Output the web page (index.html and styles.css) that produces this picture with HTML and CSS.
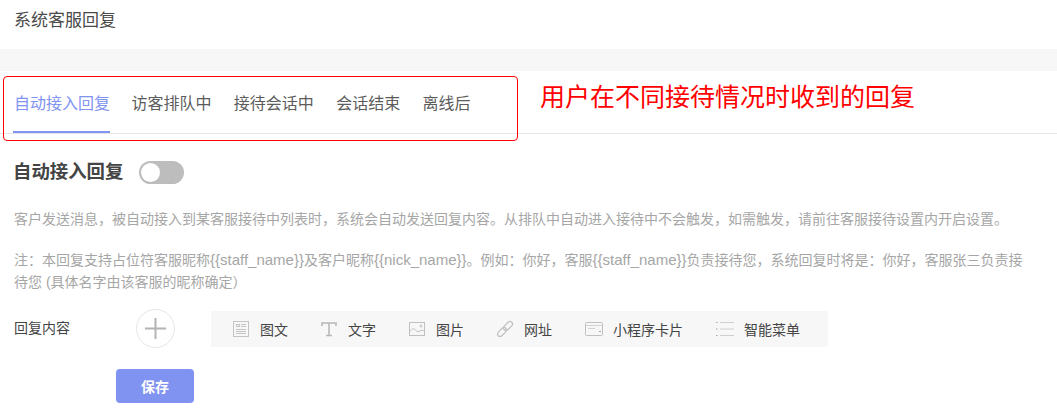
FILE: index.html
```html
<!DOCTYPE html>
<html lang="zh-CN">
<head>
    <meta charset="UTF-8">
    <title>系统客服回复</title>
    <link rel="stylesheet" href="styles.css">
</head>
<body>
    <header class="page-head">系统客服回复</header>
    <div class="strip"></div>

    <nav class="tabs">
        <a class="tab active">自动接入回复</a>
        <a class="tab">访客排队中</a>
        <a class="tab">接待会话中</a>
        <a class="tab">会话结束</a>
        <a class="tab">离线后</a>
    </nav>

    <!-- annotation drawn on top of the tabs -->
    <div class="note-box"></div>
    <div class="note-text">用户在不同接待情况时收到的回复</div>

    <main class="content">
        <div class="section-head">
            <h2>自动接入回复</h2>
            <span class="switch"><span class="knob"></span></span>
        </div>

        <p class="desc first">客户发送消息，被自动接入到某客服接待中列表时，系统会自动发送回复内容。从排队中自动进入接待中不会触发，如需触发，请前往客服接待设置内开启设置。</p>
        <p class="desc">注：本回复支持占位符客服昵称<span class="latin">{{staff_name}}</span>及客户昵称<span class="latin">{{nick_name}}</span>。例如：你好，客服<span class="latin">{{staff_name}}</span>负责接待您，系统回复时将是：你好，客服张三负责接<br>待您 (具体名字由该客服的昵称确定）</p>

        <div class="reply-row">
            <span class="reply-label">回复内容</span>
            <span class="add-btn">
                <svg width="21" height="21" viewBox="0 0 21 21"><path d="M10.500 0v21M0 10.500h21" stroke="#b4b4b4" stroke-width="2" fill="none"/></svg>
            </span>
            <div class="toolbar">
                <div class="tool">
                    <svg class="tool-icon" width="18" height="18" viewBox="0 0 18 18" fill="none" stroke="#c4c4c4">
                        <rect x="1.500" y="1.500" width="15" height="15"/>
                        <rect x="4.500" y="4.500" width="3" height="2"/>
                        <path d="M9 4.500h5M9 6.500h5M4 9.500h10M4 11.500h10M4 13.500h10"/>
                    </svg>
                    <span>图文</span>
                </div>
                <div class="tool">
                    <svg class="tool-icon" width="18" height="18" viewBox="0 0 18 18" fill="none" stroke="#b8b8b8">
                        <path d="M2 6V3h14v3M9 3v13M6 15.500h6" stroke-width="1.600"/>
                    </svg>
                    <span>文字</span>
                </div>
                <div class="tool">
                    <svg class="tool-icon" width="18" height="18" viewBox="0 0 18 18" fill="none" stroke="#c0c0c0">
                        <rect x="1.500" y="2.500" width="15" height="13"/>
                        <path d="M2 11.500c2-3 3.500-3.500 5.500-1.500s3 2 4.500 1 3-1 4 0"/>
                        <circle cx="13" cy="6" r="1"/>
                    </svg>
                    <span>图片</span>
                </div>
                <div class="tool">
                    <svg class="tool-icon" width="18" height="18" viewBox="0 0 18 18" fill="none" stroke="#c0c0c0" stroke-width="1.200">
                        <g transform="rotate(-45 9 9)">
                            <rect x="-0.500" y="6.500" width="10.500" height="5" rx="2.500"/>
                            <rect x="8" y="6.500" width="10.500" height="5" rx="2.500"/>
                        </g>
                    </svg>
                    <span>网址</span>
                </div>
                <div class="tool card">
                    <svg class="tool-icon" width="20" height="18" viewBox="0 0 20 18" fill="none" stroke="#c0c0c0">
                        <rect x="1.500" y="2.500" width="17" height="13" rx="1"/>
                        <path d="M2 5.500h16M4 8.500h7" stroke="#d2d2d2"/>
                        <path d="M15 11.500h2" stroke="#a8a8a8"/>
                    </svg>
                    <span>小程序卡片</span>
                </div>
                <div class="tool">
                    <svg class="tool-icon" width="18" height="18" viewBox="0 0 18 18" fill="none" stroke="#cfcfcf">
                        <path d="M4 2.500h14M4 9h14M4 15.500h14"/>
                        <path d="M0 2.500h1.500M0 9h1.500M0 15.500h1.500" stroke="#a8a8a8"/>
                    </svg>
                    <span>智能菜单</span>
                </div>
            </div>
        </div>

        <button class="save-btn" type="button">保存</button>
    </main>
</body>
</html>
```

FILE: styles.css
```css
html {
    background: #fff;
}

body {
    margin: 0;
    font-family: "Liberation Sans", "Noto Sans CJK SC", sans-serif;
    color: #333;
}

.page-head {
    height: 49px;
    padding: 9px 0 0 14px;
    box-sizing: border-box;
    font-size: 17px;
    line-height: 24px;
    color: #4a4a4a;
}

.strip {
    height: 22px;
    background: #f7f7f7;
}

.tabs {
    display: flex;
    gap: 22.4px;
    height: 62px;
    padding-left: 13px;
    border-bottom: 1px solid #e6e6e6;
}

.tab {
    height: 62px;
    box-sizing: border-box;
    padding-top: 21px;
    font-size: 16px;
    line-height: 24px;
    color: #5c5c5c;
}

.tab.active {
    width: 97px;
    margin-right: -1px;
    padding-left: 1px;
    color: #8093f1;
    border-bottom: 2px solid #8093f1;
}

.note-box {
    position: absolute;
    left: 3px;
    top: 76px;
    width: 513px;
    height: 63px;
    border: 1px solid #f00;
    border-radius: 4px;
}

.note-text {
    position: absolute;
    left: 540px;
    top: 80px;
    font-size: 25px;
    line-height: 34px;
    color: #f00;
}

.content {
    padding-left: 14px;
}

.section-head {
    display: flex;
    align-items: center;
    gap: 16px;
    margin-top: 26px;
    height: 24px;
}

.section-head h2 {
    margin: 0 0 0 -1px;
    font-size: 18.4px;
    line-height: 24px;
    font-weight: 700;
    color: #444;
}

.switch {
    display: block;
    width: 45px;
    height: 23px;
    border-radius: 12px;
    background: #bdbdbd;
}

.knob {
    display: block;
    width: 19px;
    height: 19px;
    margin: 2px 0 0 2px;
    border-radius: 50%;
    background: #fff;
}

.desc {
    margin: 19px 0 0;
    width: 1030px;
    font-size: 14px;
    line-height: 22px;
    color: #a6a6a6;
}

.desc.first {
    margin-top: 24px;
}

/* the latin part of the notes runs a little larger than the chinese */
.latin {
    font-size: 15px;
}

.reply-row {
    display: flex;
    align-items: center;
    margin-top: 16px;
    height: 40px;
}

.reply-label {
    width: 122px;
    margin-bottom: 4px;
    font-size: 14px;
    color: #444;
}

.add-btn {
    display: flex;
    align-items: center;
    justify-content: center;
    width: 39px;
    height: 39px;
    margin-bottom: 2px;
    box-sizing: border-box;
    border: 1px solid #e6e6e6;
    border-radius: 50%;
}

.toolbar {
    display: flex;
    align-items: center;
    gap: 32px;
    width: 617px;
    height: 36px;
    margin-left: 36px;
    padding-left: 21px;
    box-sizing: border-box;
    background: #f7f7f7;
}

.tool {
    display: flex;
    align-items: center;
    gap: 10px;
    font-size: 14px;
    color: #444;
}

.tool.card {
    gap: 9px;
    margin-right: 1px;
}

.save-btn {
    display: block;
    width: 78px;
    height: 34px;
    margin: 20px 0 0 102px;
    border: 0;
    border-radius: 4px;
    background: #8093f1;
    color: #fff;
    font-family: inherit;
    font-size: 14px;
    font-weight: 700;
}
```
